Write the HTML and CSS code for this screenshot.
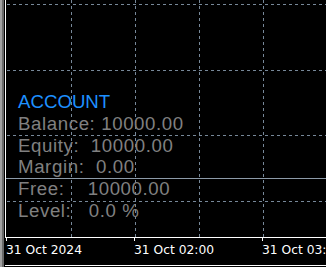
FILE: index.html
```html
<!DOCTYPE html>
<html lang="en">
    <head>
        <meta charset="UTF-8" />
        <title>Chart</title>
        <link rel="stylesheet" href="styles.css">
    </head>
    <body>
        <div class="window">
            <div class="edge"></div>
            <div class="main">
                <div class="chart">
                    <svg class="grid" width="320" height="237">
                        <g stroke="#778899" stroke-width="1" stroke-dasharray="3 3">
                            <line x1="65.5" y1="0" x2="65.5" y2="237" />
                            <line x1="129.5" y1="0" x2="129.5" y2="237" />
                            <line x1="193.5" y1="0" x2="193.5" y2="237" />
                            <line x1="257.5" y1="0" x2="257.5" y2="237" />
                            <line x1="1" y1="4.5" x2="320" y2="4.5" />
                            <line x1="1" y1="70.5" x2="320" y2="70.5" />
                            <line x1="1" y1="135.5" x2="320" y2="135.5" />
                            <line x1="1" y1="201.5" x2="320" y2="201.5" />
                        </g>
                        <line x1="0" y1="178.5" x2="320" y2="178.5" stroke="#8c9aa8" stroke-width="1" />
                    </svg>
                    <div class="account">
                        <div class="title">ACCOUNT</div>
                        <div class="row">Balance: 10000.00</div>
                        <div class="row">Equity:  10000.00</div>
                        <div class="row">Margin:  0.00</div>
                        <div class="row">Free:    10000.00</div>
                        <div class="row">Level:   0.0 %</div>
                    </div>
                </div>
                <div class="axis">
                    <div class="label"><span class="tick"></span><span>31 Oct 2024</span></div>
                    <div class="label"><span class="tick"></span><span>31 Oct 02:00</span></div>
                    <div class="label"><span class="tick"></span><span>31 Oct 03:00</span></div>
                </div>
            </div>
        </div>
    </body>
</html>
```

FILE: styles.css
```css
html,
body {
    margin: 0;
    background: #000;
}
body {
    width: 326px;
    height: 267px;
    overflow: hidden;
}
.window {
    display: flex;
    height: 267px;
}
.edge {
    width: 4px;
    flex-shrink: 0;
    background: linear-gradient(to right, #a0a0a0 0 2px, #696969 2px 4px);
}
.main {
    flex: 1;
    display: flex;
    flex-direction: column;
    padding-left: 1px;
    min-width: 0;
}
.chart {
    position: relative;
    height: 237px;
    flex-shrink: 0;
    border-left: 1px solid #fff;
    border-bottom: 1px solid #fff;
    overflow: hidden;
}
.grid {
    position: absolute;
    left: 0;
    top: 0;
}
.account {
    position: relative;
    padding: 91px 0 0 12px;
    font-family: "Liberation Sans", Arial, sans-serif;
    font-size: 18.67px;
    line-height: 21.8px;
}
.title {
    color: #1e90ff;
}
.row {
    color: #808080;
    letter-spacing: 0.6px;
    white-space: pre;
}
.axis {
    height: 27px;
    flex-shrink: 0;
    display: flex;
    padding-left: 1px;
    border-bottom: 1px solid #fff;
    overflow: hidden;
    font-family: "DejaVu Sans", Verdana, sans-serif;
    font-size: 12.3px;
    line-height: 14px;
    color: #fff;
}
.label {
    width: 128px;
    flex-shrink: 0;
    display: flex;
    flex-direction: column;
    white-space: nowrap;
}
.tick {
    width: 1px;
    height: 3px;
    background: #fff;
    margin-bottom: 2px;
}
```
